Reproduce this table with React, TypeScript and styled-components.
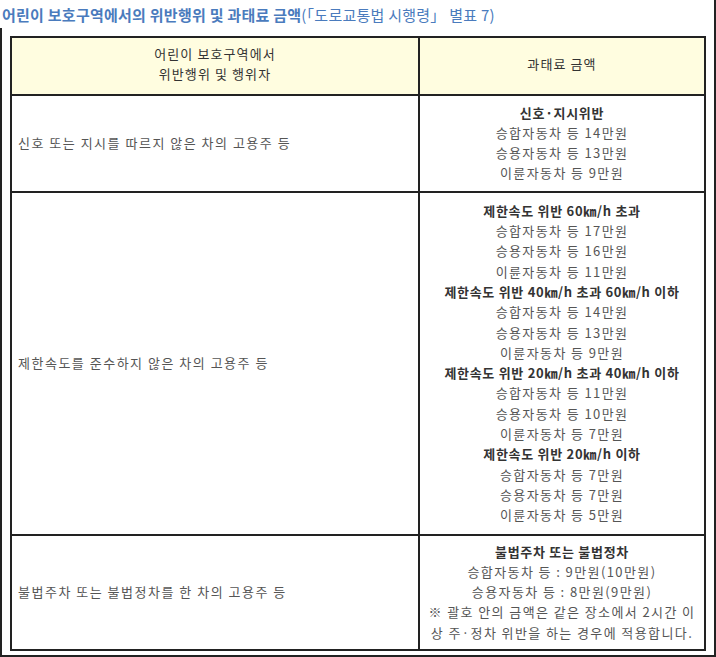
import { FC } from "react";
import styled, { createGlobalStyle } from "styled-components";

const GlobalStyle = createGlobalStyle`
  html, body {
    margin: 0;
    padding: 0;
    background: #fff;
  }
  body {
    font-family: "Noto Sans CJK KR", "Noto Sans", sans-serif;
  }
`;

const Frame = styled.div`
  width: 716px;
  height: 657px;
  box-sizing: border-box;
  border-right: 2px solid #222;
  border-bottom: 2px solid #222;
  display: flex;
  flex-direction: column;
`;

const Title = styled.h3`
  margin: 0;
  padding: 6px 0 0 2px;
  height: 22px;
  font-size: 15px;
  font-weight: 700;
  line-height: 18px;
  color: #4a7bbd;
  letter-spacing: 0.25px;
  white-space: nowrap;
`;

const TitleNote = styled.span`
  font-weight: 400;
`;

const Body = styled.div`
  flex: 1;
  border-left: 2px solid #222;
  padding: 8px 8px 4px 8px;
`;

const Table = styled.table`
  width: 696px;
  table-layout: fixed;
  border-collapse: collapse;
  border: 2px solid #222;
  font-size: 13px;
  line-height: 20.3px;
  color: #555;
  letter-spacing: 1.5px;
`;

const HeadCell = styled.th<{ $width?: number }>`
  box-sizing: border-box;
  width: ${({ $width }) => ($width ? `${$width}px` : "auto")};
  background: #fffde0;
  border: 2px solid #222;
  padding: 6px 6px 9px;
  font-weight: 400;
  color: #333;
  letter-spacing: 1.1px;
  text-align: center;
`;

const Cell = styled.td<{ $center?: boolean; $pad: number }>`
  border: 2px solid #222;
  padding: ${({ $pad }) => `${$pad}px 6px`};
  text-align: ${({ $center }) => ($center ? "center" : "left")};
  vertical-align: middle;
`;

const Line = styled.div<{ $strong?: boolean }>`
  font-weight: ${({ $strong }) => ($strong ? 700 : 400)};
  color: ${({ $strong }) => ($strong ? "#333" : "#555")};
  letter-spacing: ${({ $strong }) => ($strong ? "0.7px" : "1.4px")};
`;

interface Row {
  act: string;
  pad: number;
  lines: { text: string; strong?: boolean }[];
}

const rows: Row[] = [
  {
    act: "신호 또는 지시를 따르지 않은 차의 고용주 등",
    pad: 7,
    lines: [
      { text: "신호·지시위반", strong: true },
      { text: "승합자동차 등 14만원" },
      { text: "승용자동차 등 13만원" },
      { text: "이륜자동차 등 9만원" },
    ],
  },
  {
    act: "제한속도를 준수하지 않은 차의 고용주 등",
    pad: 8,
    lines: [
      { text: "제한속도 위반 60㎞/h 초과", strong: true },
      { text: "승합자동차 등 17만원" },
      { text: "승용자동차 등 16만원" },
      { text: "이륜자동차 등 11만원" },
      { text: "제한속도 위반 40㎞/h 초과 60㎞/h 이하", strong: true },
      { text: "승합자동차 등 14만원" },
      { text: "승용자동차 등 13만원" },
      { text: "이륜자동차 등 9만원" },
      { text: "제한속도 위반 20㎞/h 초과 40㎞/h 이하", strong: true },
      { text: "승합자동차 등 11만원" },
      { text: "승용자동차 등 10만원" },
      { text: "이륜자동차 등 7만원" },
      { text: "제한속도 위반 20㎞/h 이하", strong: true },
      { text: "승합자동차 등 7만원" },
      { text: "승용자동차 등 7만원" },
      { text: "이륜자동차 등 5만원" },
    ],
  },
  {
    act: "불법주차 또는 불법정차를 한 차의 고용주 등",
    pad: 6,
    lines: [
      { text: "불법주차 또는 불법정차", strong: true },
      { text: "승합자동차 등 : 9만원(10만원)" },
      { text: "승용자동차 등 : 8만원(9만원)" },
      { text: "※ 괄호 안의 금액은 같은 장소에서 2시간 이" },
      { text: "상 주·정차 위반을 하는 경우에 적용합니다." },
    ],
  },
];

const App: FC = () => {
  return (
    <>
      <GlobalStyle />
      <Frame>
        <Title>
          어린이 보호구역에서의 위반행위 및 과태료 금액
          <TitleNote>(「도로교통법 시행령」 별표 7)</TitleNote>
        </Title>
        <Body>
          <Table>
            <thead>
              <tr>
                <HeadCell $width={408}>
                  어린이 보호구역에서
                  <br />
                  위반행위 및 행위자
                </HeadCell>
                <HeadCell>과태료 금액</HeadCell>
              </tr>
            </thead>
            <tbody>
              {rows.map((row) => (
                <tr key={row.act}>
                  <Cell $pad={row.pad}>{row.act}</Cell>
                  <Cell $center $pad={row.pad}>
                    {row.lines.map((line, i) => (
                      <Line key={i} $strong={line.strong}>
                        {line.text}
                      </Line>
                    ))}
                  </Cell>
                </tr>
              ))}
            </tbody>
          </Table>
        </Body>
      </Frame>
    </>
  );
};

export default App;
